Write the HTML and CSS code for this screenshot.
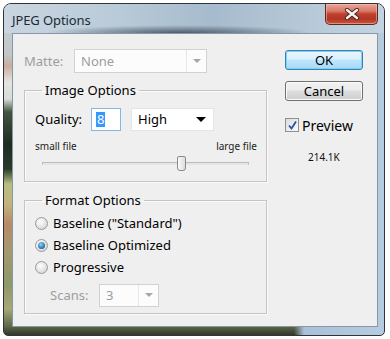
FILE: index.html
```html
<!DOCTYPE html>
<html>
<head>
<meta charset="utf-8">
<link rel="stylesheet" href="styles.css">
</head>
<body>
<div class="window">
  <div class="titlebar">
    <span class="title">JPEG Options</span>
    <div class="close">
      <svg width="16" height="12" viewBox="0 0 16 12">
        <path d="M3 2 L13 10 M13 2 L3 10" stroke="#4a2320" stroke-width="4.2" stroke-linecap="round"/>
        <path d="M3 2 L13 10 M13 2 L3 10" stroke="#f4f4f4" stroke-width="2.4" stroke-linecap="round"/>
      </svg>
    </div>
  </div>
  <div class="client">
    <div class="left">
      <div class="matte-row">
        <span class="lbl disabled">Matte:</span>
        <div class="select disabled-select matte-select">
          <span class="sel-text">None</span>
          <span class="sel-btn"><span class="tri gray"></span></span>
        </div>
      </div>

      <fieldset class="group image-group">
        <legend>Image Options</legend>
        <div class="quality-row">
          <span class="lbl big">Quality:</span>
          <div class="qinput"><span class="qsel">8</span></div>
          <div class="select high-select">
            <span class="sel-text">High</span>
            <span class="tri black"></span>
          </div>
        </div>
        <div class="size-row">
          <span>small file</span>
          <span>large file</span>
        </div>
        <div class="slider">
          <div class="track"></div>
          <div class="thumb"></div>
        </div>
      </fieldset>

      <fieldset class="group format-group">
        <legend>Format Options</legend>
        <div class="radio-row"><span class="radio"></span><span class="big">Baseline (&quot;Standard&quot;)</span></div>
        <div class="radio-row"><span class="radio on"><span class="dot"></span></span><span class="big">Baseline Optimized</span></div>
        <div class="radio-row"><span class="radio"></span><span class="big">Progressive</span></div>
        <div class="scans-row">
          <span class="lbl disabled">Scans:</span>
          <div class="select disabled-select scans-select">
            <span class="sel-text">3</span>
            <span class="sel-btn"><span class="tri gray"></span></span>
          </div>
        </div>
      </fieldset>
    </div>

    <div class="right">
      <button class="btn ok">OK</button>
      <button class="btn cancel">Cancel</button>
      <div class="preview-row">
        <span class="check">
          <svg width="11" height="11" viewBox="0 0 11 11"><path d="M2 5.5 L4.5 8.5 L9 1.5" fill="none" stroke="#2f4ea8" stroke-width="1.8"/></svg>
        </span>
        <span class="big">Preview</span>
      </div>
      <div class="filesize">214.1K</div>
    </div>
  </div>
</div>
</body>
</html>
```

FILE: styles.css
```css
* { box-sizing: border-box; }
html, body { margin: 0; padding: 0; background: #ffffff; }
body {
  font-family: "Noto Sans", "Open Sans", sans-serif;
  width: 390px;
  height: 339px;
  overflow: hidden;
}

.window {
  margin: 3px 0 0 3px;
  width: 382px;
  height: 333px;
  border: 1px solid #2e3438;
  border-radius: 8px 8px 5px 5px;
  padding: 0 6px 8px 8px;
  display: flex;
  flex-direction: column;
  background:
    radial-gradient(ellipse 130px 10px at 170px 30px, rgba(40,55,70,0.75), rgba(40,55,70,0) 100%),
    linear-gradient(to right, rgba(0,0,0,0) 0px, rgba(0,0,0,0) 290px, #a9c1d9 300px, #b5cbe0 100%),
    linear-gradient(to bottom,
      #c6ced2 0px, #c2c8ca 50px, #c8aca2 62px, #e6e4e0 78px, #d8dcd8 95px,
      #425440 108px, #1e2c22 140px, #283a2a 165px, #b8be82 180px, #c2b47c 200px,
      #b88a68 220px, #a89870 245px, #8e9868 280px, #a8a878 305px, #5e6a48 322px, #2a2a22 333px);
  box-shadow: inset 0 1px 0 rgba(255,255,255,0.6);
}

.titlebar {
  height: 29px;
  flex: none;
  display: flex;
  align-items: flex-start;
  justify-content: space-between;
  background: linear-gradient(to right, #c9d6e1 0%, #b9cad8 30%, #a6bbcd 55%, #b7c9d8 80%, #c3d3e1 100%);
  margin: 0 -6px 0 -8px;
  padding: 0 6px 0 8px;
  border-radius: 7px 7px 0 0;
  position: relative;
}
.titlebar::after {
  content: "";
  position: absolute;
  left: 40px; right: 70px; bottom: 0; height: 8px;
  background: radial-gradient(ellipse at 50% 100%, rgba(45,58,72,0.75), rgba(45,58,72,0) 70%);
}
.title {
  font-family: "Noto Sans", sans-serif;
  font-size: 13px;
  color: #1d2a35;
  margin-top: 7px;
  letter-spacing: -0.1px;
}
.close {
  width: 53px;
  height: 21px;
  margin-top: 0;
  margin-right: 0;
  border: 1px solid #5a2a22;
  border-top: none;
  border-radius: 0 0 5px 5px;
  background: linear-gradient(to bottom, #e8a898 0%, #d8796a 35%, #c0412d 50%, #b33524 75%, #c9583c 100%);
  display: flex;
  align-items: center;
  justify-content: center;
  box-shadow: inset 0 0 0 1px rgba(255,200,190,0.5);
}

.client {
  flex: 1;
  background: #efefef;
  border: 1px solid #8797a6;
  display: flex;
  padding: 15px 0 0 11px;
  color: #000;
  font-size: 12px;
}

.left { width: 243px; display: flex; flex-direction: column; }
.right { margin-left: 18px; width: 78px; display: flex; flex-direction: column; }

.big { font-size: 13px; }
.lbl { font-size: 13px; }
.disabled { color: #9d9d9d; }

.matte-row { display: flex; align-items: center; height: 24px; }
.matte-row .lbl { width: 50px; padding-left: 0; }

.select {
  display: flex;
  align-items: center;
  position: relative;
  height: 24px;
  border: 1px solid #d2d2d2;
  background: #fcfcfc;
}
.sel-text { font-size: 13px; padding-left: 6px; flex: 1; }
.disabled-select .sel-text { color: #9d9d9d; }
.sel-btn {
  width: 20px;
  height: 100%;
  border-left: 1px solid #e6e6e6;
  display: flex;
  align-items: center;
  justify-content: center;
}
.matte-select { width: 133px; }
.tri { width: 0; height: 0; border-left: 4px solid transparent; border-right: 4px solid transparent; }
.tri.gray { border-top: 4px solid #a6a6a6; }
.tri.black { border-top: 5px solid #000; border-left-width: 5px; border-right-width: 5px; margin-right: 7px; }

.group {
  margin: 0;
  border: 1px solid #c5c5c5;
  box-shadow: inset 1px 1px 0 #fafafa, 1px 1px 0 #fafafa;
  padding: 0 9px 0 10px;
  min-width: 0;
}
.group legend {
  font-size: 13px;
  line-height: 18px;
  padding: 0 3px;
  margin-left: 7px;
}
.image-group { margin-top: 8px; height: 101px; padding-top: 8px; }
.format-group { margin-top: 9px; height: 123px; padding-top: 3px; }

.quality-row { display: flex; align-items: center; height: 24px; }
.quality-row .lbl { width: 56px; }
.qinput {
  width: 30px;
  height: 23px;
  border: 1px solid #85b7e6;
  background: #fff;
  display: flex;
  align-items: center;
  padding-left: 4px;
}
.qsel { background: #3399ff; color: #fff; font-size: 13px; line-height: 15px; padding: 0 1px; }
.high-select {
  width: 83px;
  height: 23px;
  margin-left: 10px;
  border-color: #e4e4e4;
  background: #ffffff;
}

.size-row {
  display: flex;
  justify-content: space-between;
  font-size: 10px;
  color: #222;
  margin-top: 8px;
  height: 14px;
  line-height: 14px;
}
.slider { position: relative; height: 22px; margin: 0 8px 0 7px; }
.track {
  position: absolute; left: 0; right: 0; top: 9px; height: 3px;
  border: 1px solid #bcbcbc; border-bottom-color: #e6e6e6; background: #e4e4e4;
}
.thumb {
  position: absolute; left: 135px; top: 3px; width: 9px; height: 15px;
  border: 1px solid #8a8a8a; border-radius: 2px 2px 3px 3px;
  background: linear-gradient(to right, #fafafa, #dcdcdc);
}

.radio-row { display: flex; align-items: center; height: 22px; gap: 5px; }
.radio {
  width: 13px; height: 13px; border-radius: 50%;
  border: 1px solid #9a9a9a;
  background: radial-gradient(circle at 40% 35%, #ffffff, #d6d6d6 80%);
  display: flex; align-items: center; justify-content: center;
  flex: none;
}
.radio .dot {
  width: 7px; height: 7px; border-radius: 50%;
  background: radial-gradient(circle at 40% 35%, #8fd2f5, #1f6fa8 70%, #0c3f6b);
}

.scans-row { display: flex; align-items: center; height: 24px; margin-top: 5px; padding-left: 15px; }
.scans-row .lbl { width: 49px; }
.scans-select { width: 60px; height: 23px; }
.scans-select .sel-btn { width: 20px; }

.btn {
  width: 78px;
  height: 20px;
  font-family: "Noto Sans", sans-serif;
  font-size: 13px;
  line-height: 16px;
  padding: 0;
  border-radius: 3px;
  color: #000;
}
.ok {
  margin-top: 1px;
  border: 1px solid #3c7fb1;
  background: linear-gradient(to bottom, #eaf6fd 0%, #d9f0fc 45%, #bee6fd 50%, #a7d9f5 100%);
  box-shadow: inset 0 0 0 1px #7ed1f6;
}
.cancel {
  margin-top: 11px;
  border: 1px solid #707070;
  background: linear-gradient(to bottom, #f2f2f2 0%, #ebebeb 45%, #dddddd 50%, #cfcfcf 100%);
  box-shadow: inset 0 0 0 1px #fbfbfb;
}
.preview-row { display: flex; align-items: center; margin-top: 16px; height: 16px; gap: 3px; }
.check {
  width: 14px; height: 14px; border: 1px solid #8e8f8f;
  background: linear-gradient(135deg, #dcdcdc, #fbfbfb);
  display: flex; align-items: center; justify-content: center;
}
.preview-row .big { font-size: 14px; }
.filesize { font-size: 10px; margin-top: 17px; padding-left: 23px; color: #111; }
```
